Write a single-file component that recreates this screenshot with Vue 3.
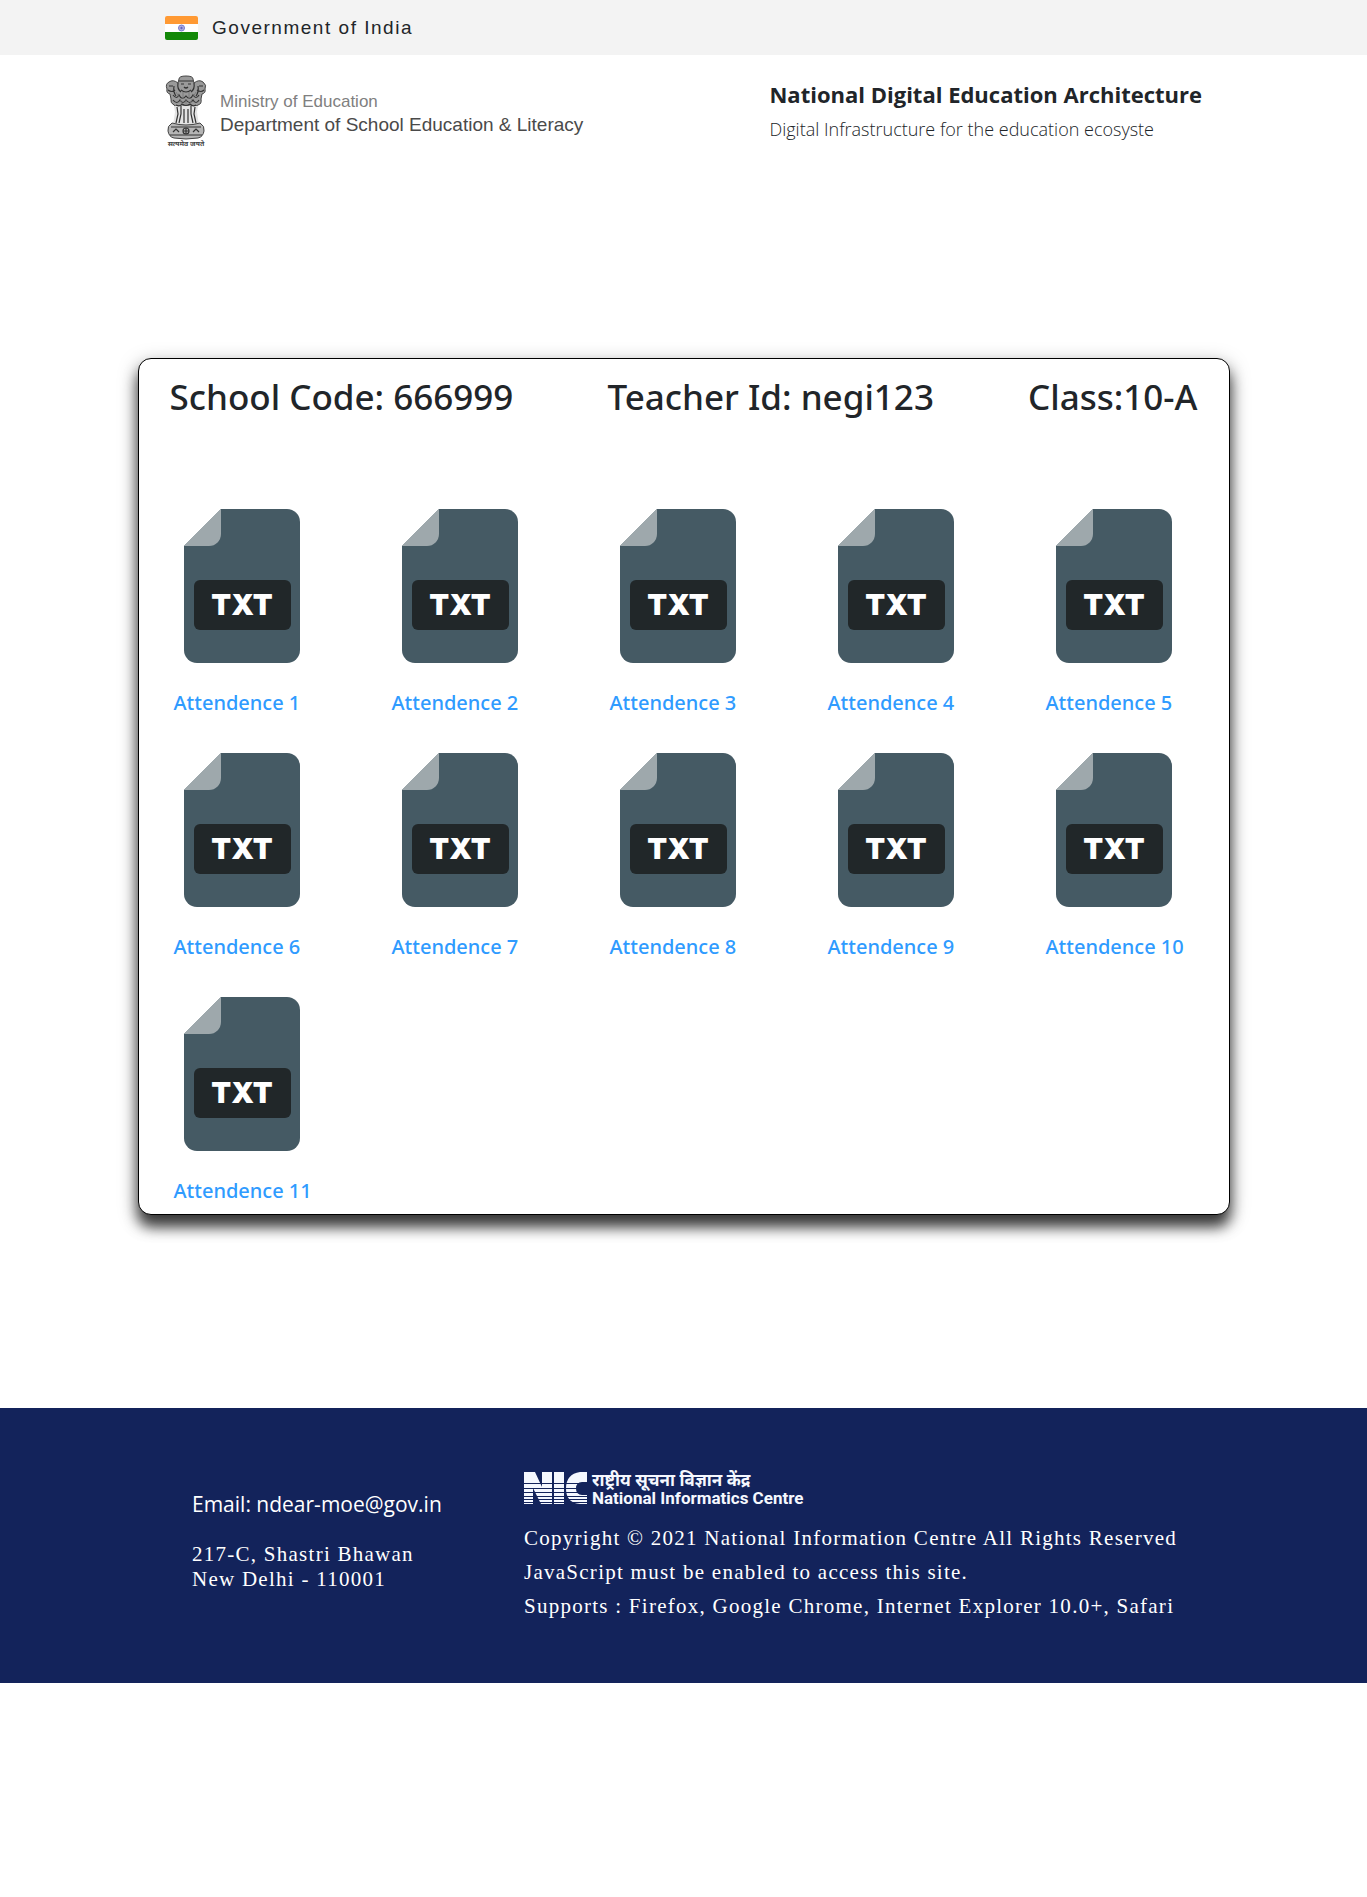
<script setup>
const details = ['School Code: 666999', 'Teacher Id: negi123', 'Class:10-A']
const files = Array.from({ length: 11 }, (_, i) => `Attendence ${i + 1}`)
const spokes = Array.from({ length: 12 }, (_, i) => i * 15)
</script>

<template>
  <div class="page">
    <div class="gov-bar">
      <div class="wrap gov">
        <svg class="flag" viewBox="0 0 33 24" aria-hidden="true">
          <clipPath id="flag-clip"><rect width="33" height="24" rx="2" /></clipPath>
          <g clip-path="url(#flag-clip)">
            <rect width="33" height="24" fill="#fff" />
            <rect width="33" height="8" fill="#ff9933" />
            <rect y="16" width="33" height="8" fill="#138808" />
          </g>
          <g stroke="#5a5abf" fill="none">
            <circle cx="16.500" cy="12" r="3" stroke-width=".8" />
            <path v-for="a in spokes" :key="a" d="M13.500 12h6" stroke-width=".3" :transform="`rotate(${a} 16.5 12)`" />
          </g>
        </svg>
        <span class="gov-name">Government of India</span>
      </div>
    </div>

    <header class="wrap masthead">
      <div class="ministry">
        <svg class="emblem" viewBox="0 0 42 72" aria-hidden="true">
          <g fill="#9a9a9a" stroke="#444" stroke-width="1">
            <path d="M14 4q0-3 7-3t7 3l1 4q5-4 9-1 4 3 2 7 1 4-3 5l-1 5q1 5-3 6-5 4-12 3-8 1-12-3-4-2-3-6l-1-5q-4-1-3-5-2-5 2-7 4-3 9 1z" />
            <path d="M9 31l24 0-1 6 2 13H8l2-13z" fill="#e4e4e4" stroke="none" />
            <path d="M7 48q14 4 28 0 5 3 4 8-1 6-6 7-12 2-24 0-5-1-6-7-1-5 4-8z" fill="#b5b5b5" />
          </g>
          <g fill="none" stroke="#333" stroke-width="1.200">
            <path d="M14 6h14M16 9h3M23 9h3M19 12q2 2 4 0M13 8q-1 6 3 9M29 8q1 6-3 9M16 15q5 4 10 0M4 11h4M34 11h4M3 15q4 3 7 0M32 15q4 3 7 0M9 11q-1 6 2 10M33 11q1 6-2 10" />
            <path d="M8 20q4 5 6 0 3 6 7 1 4 5 7-1 3 5 6 0M8 25q4 5 7 0 3 5 6 0 4 5 7 0 3 5 6 0M11 30q4 2 6-1 4 3 8 0 3 3 6 1" />
            <path d="M12 32l1 7-2 9M16 31v8l-2 9M19 34v14M23 34v14M26 31v8l2 9M30 32l-1 7 2 9" />
            <path d="M6 52h30M5 60h32" />
            <circle cx="21" cy="56" r="3" />
            <path d="M18 56h6M21 53v6M8 57l3-3 3 3M28 57l3-3 3 3" />
          </g>
          <g fill="none" stroke="#777" stroke-width=".8">
            <path d="M11 17l3 5M18 17v7M24 17v7M31 17l-3 5M15 24l2 5M21 24v6M27 24l-2 5" />
          </g>
          <text x="21" y="71" text-anchor="middle" class="motto">सत्यमेव जयते</text>
        </svg>
        <div class="ministry-text">
          <div class="ministry-name">Ministry of Education</div>
          <div class="department">Department of School Education &amp; Literacy</div>
        </div>
      </div>
      <div class="programme">
        <h1>National Digital Education Architecture</h1>
        <p>Digital Infrastructure for the education ecosyste</p>
      </div>
    </header>

    <main class="card">
      <div class="details">
        <h2 v-for="d in details" :key="d">{{ d }}</h2>
      </div>
      <div class="files">
        <a v-for="f in files" :key="f" href="#" class="file">
          <svg class="file-icon" viewBox="0 0 116 154" aria-hidden="true">
            <path d="M37 0H103a13 13 0 0 1 13 13V141a13 13 0 0 1-13 13H13a13 13 0 0 1-13-13V37z" fill="#455a64" />
            <path d="M37 0V25a12 12 0 0 1-12 12H0z" fill="#9ea8ac" />
            <rect x="10" y="71" width="97" height="50" rx="6" fill="#212729" />
            <text x="58" y="106" text-anchor="middle" class="ext">TXT</text>
          </svg>
          <span class="file-name">{{ f }}</span>
        </a>
      </div>
    </main>

    <footer>
      <div class="foot">
        <div class="contact">
          <div class="email">Email: ndear-moe@gov.in</div>
          <address>217-C, Shastri Bhawan<br />New Delhi - 110001</address>
        </div>
        <div class="legal">
          <svg class="nic" viewBox="0 0 290 40" aria-hidden="true">
            <clipPath id="nic-clip">
              <rect y="4" width="64" height="11" />
              <rect y="16" width="64" height="4" />
              <rect y="21" width="64" height="3" />
              <rect y="25" width="64" height="3" />
              <rect y="29" width="64" height="2" />
              <rect y="32" width="64" height="2" />
              <rect y="35" width="64" height="1" />
            </clipPath>
            <g fill="#f5f8ff" clip-path="url(#nic-clip)">
              <path d="M0 4H11L18 19V4H28V36H17L9 20V36H0zM30 4H40V36H30zM63 4V14H58Q52 14 52 20.500T58 27H63V36H56Q42 35 42 20.500T56 4z" />
            </g>
            <text x="68" y="18" class="nic-hi">राष्ट्रीय सूचना विज्ञान केंद्र</text>
            <text x="68" y="36" class="nic-en">National Informatics Centre</text>
          </svg>
          <p>Copyright © 2021 National Information Centre All Rights Reserved</p>
          <p>JavaScript must be enabled to access this site.</p>
          <p>Supports : Firefox, Google Chrome, Internet Explorer 10.0+, Safari</p>
        </div>
      </div>
    </footer>
  </div>
</template>

<style>
body {
  margin: 0;
  background: #fff;
}
</style>

<style scoped>
.page {
  padding-bottom: 214px;
  color: #212529;
  font-family: "Open Sans", "Noto Sans", sans-serif;
}
h1,
h2,
p {
  margin: 0;
}
.wrap {
  max-width: 1037px;
  margin: 0 auto;
}
.gov-bar {
  background: #f3f3f3;
}
.gov {
  display: flex;
  align-items: center;
  gap: 14px;
  height: 55px;
}
.flag {
  width: 33px;
  height: 24px;
}
.gov-name {
  font: 19px/24px "Liberation Sans", Arial, sans-serif;
  letter-spacing: 0.08em;
}
.masthead {
  display: flex;
  justify-content: space-between;
  padding: 20px 0;
}
.ministry {
  display: flex;
  gap: 13px;
}
.emblem {
  width: 42px;
  height: 72px;
}
.motto {
  font: bold 7px "Noto Sans", sans-serif;
  fill: #444;
}
.ministry-text {
  padding-top: 15px;
  font-family: "Liberation Sans", Arial, sans-serif;
  line-height: 23px;
  white-space: nowrap;
}
.ministry-name {
  font-size: 17px;
  color: #808080;
}
.department {
  font-size: 19px;
  color: #4a4a4a;
}
.programme {
  white-space: nowrap;
}
.programme h1 {
  font-size: 22px;
  line-height: 38px;
  font-weight: 700;
}
.programme p {
  font-size: 18px;
  line-height: 32px;
  font-weight: 300;
}
.card {
  box-sizing: border-box;
  max-width: 1092px;
  margin: 191px auto 0;
  padding: 10px 0 0;
  border: 1px solid #000;
  border-radius: 13px;
  background: #fff;
  box-shadow: 0 12px 14px rgba(0, 0, 0, 0.7), 0 6px 20px rgba(0, 0, 0, 0.35);
}
.details {
  display: flex;
  justify-content: space-between;
  padding: 0 31px;
}
.details h2 {
  font-family: "Noto Sans", sans-serif;
  font-size: 35px;
  line-height: 56px;
  font-weight: 500;
}
.files {
  display: grid;
  grid-template-columns: repeat(5, 1fr);
  margin-top: 84px;
}
.file {
  display: flex;
  flex-direction: column;
  height: 244px;
  padding-left: 35px;
  color: #2f9bff;
  text-decoration: none;
}
.file:last-child {
  height: 217px;
}
.file-icon {
  width: 116px;
  height: 154px;
  margin-left: 10px;
}
.ext {
  font: 900 29px "Inter", sans-serif;
  fill: #fff;
}
.file-name {
  margin-top: 24px;
  font-family: "Noto Sans", sans-serif;
  font-size: 20px;
  line-height: 32px;
  font-weight: 500;
}
footer {
  margin-top: 193px;
  background: #13235b;
  color: #fff;
}
.foot {
  display: grid;
  grid-template-columns: 332px 1fr;
  max-width: 983px;
  margin: 0 auto;
  padding: 60px 0;
}
.contact {
  padding-top: 21px;
}
.email {
  font-size: 21px;
  line-height: 30px;
}
address,
.legal p {
  font: 21px/25px "Liberation Serif", "Times New Roman", serif;
  letter-spacing: 0.06em;
  white-space: nowrap;
}
address {
  margin-top: 23px;
}
.nic {
  display: block;
  width: 290px;
  height: 40px;
  margin-bottom: 13px;
}
.nic-hi {
  font: bold 17px "Noto Sans", sans-serif;
  fill: #f5f8ff;
}
.nic-en {
  font: bold 17px "Roboto", sans-serif;
  fill: #f5f8ff;
}
.legal p {
  line-height: 34px;
}
</style>
